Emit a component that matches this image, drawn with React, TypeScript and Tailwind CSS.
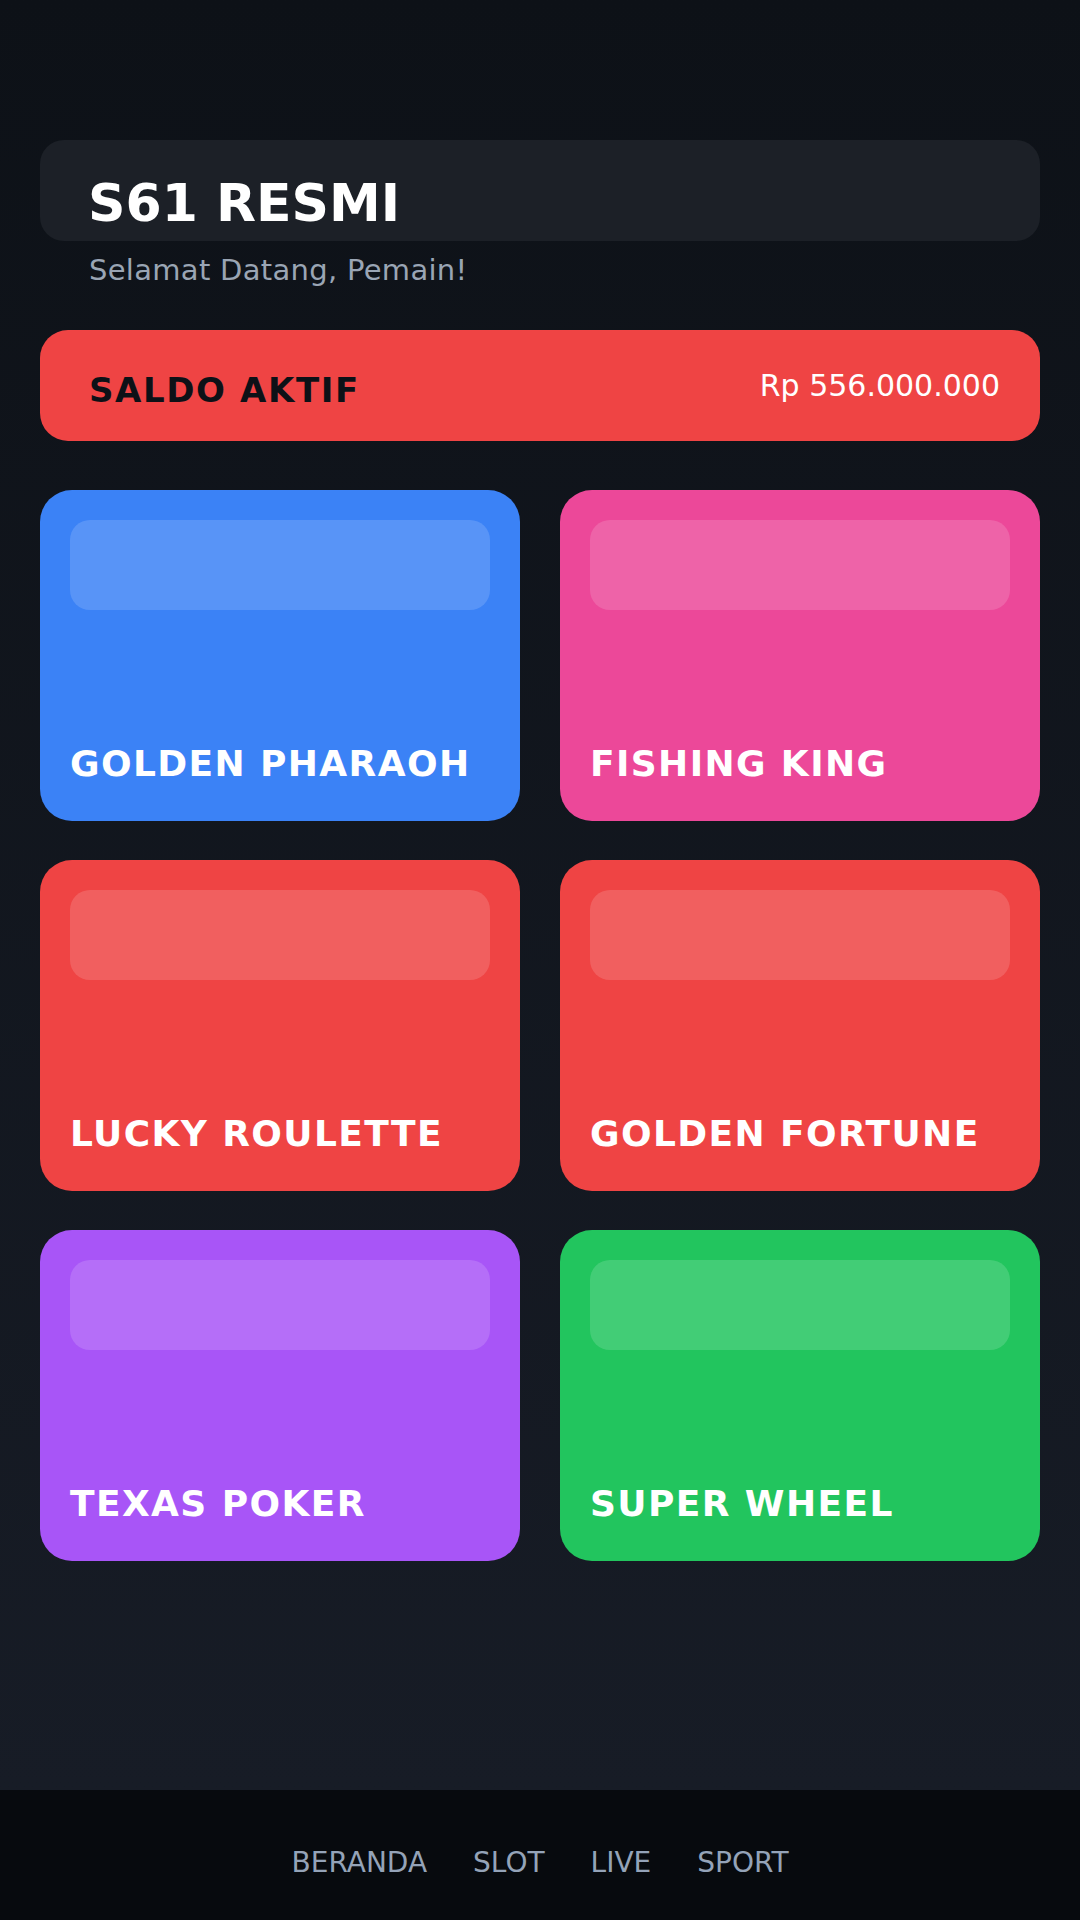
import React from "react";

type Game = {
  name: string;
  color: string;
};

const games: Game[] = [
  { name: "GOLDEN PHARAOH", color: "bg-[#3b82f6]" },
  { name: "FISHING KING", color: "bg-[#ec4899]" },
  { name: "LUCKY ROULETTE", color: "bg-[#ef4444]" },
  { name: "GOLDEN FORTUNE", color: "bg-[#ef4444]" },
  { name: "TEXAS POKER", color: "bg-[#a855f7]" },
  { name: "SUPER WHEEL", color: "bg-[#22c55e]" },
];

const navItems = ["BERANDA", "SLOT", "LIVE", "SPORT"];

const GameCard: React.FC<{ game: Game }> = ({ game }) => (
  <div
    className={`${game.color} h-[331px] rounded-[32px] p-[30px] flex flex-col justify-between`}
  >
    <div className="h-[90px] rounded-[20px] bg-white/15" />
    <div className="text-[36px] leading-[1.5] font-bold tracking-[1.4px] text-white">
      {game.name}
    </div>
  </div>
);

export default function App() {
  return (
    <div className="min-h-[1920px] flex flex-col font-['DejaVu_Sans',sans-serif]">
      <main className="flex-1 bg-gradient-to-b from-[#0d1117] to-[#171c26] px-10 pt-[140px]">
        <div className="h-[101px] rounded-[24px] bg-[#1c2027] pl-12 pt-6">
          <h1 className="text-[52px] leading-[1.5] font-bold text-white">
            S61 RESMI
          </h1>
          <p className="mt-[7px] pl-px text-[29px] leading-[1.5] tracking-[0.3px] text-[#9aa5b4]">
            Selamat Datang, Pemain!
          </p>
        </div>

        <div className="mt-[89px] h-[111px] rounded-[28px] bg-[#ef4444] pl-[49px] pr-[40px] pt-[33px] flex items-start justify-between">
          <span className="mt-[2px] text-[34px] leading-[1.5] font-bold tracking-[1.6px] text-[#0d1117]">
            SALDO AKTIF
          </span>
          <span className="text-[30px] leading-[1.5] text-white">
            Rp 556.000.000
          </span>
        </div>

        <div className="mt-[49px] grid grid-cols-2 gap-x-10 gap-y-[39px]">
          {games.map((g) => (
            <GameCard key={g.name} game={g} />
          ))}
        </div>
      </main>

      <nav className="h-[130px] bg-[#070a0e] flex items-start justify-center gap-[46px] pt-[52px]">
        {navItems.map((item) => (
          <span key={item} className="text-[28px] leading-[1.5] text-[#94a3b8]">
            {item}
          </span>
        ))}
      </nav>
    </div>
  );
}
